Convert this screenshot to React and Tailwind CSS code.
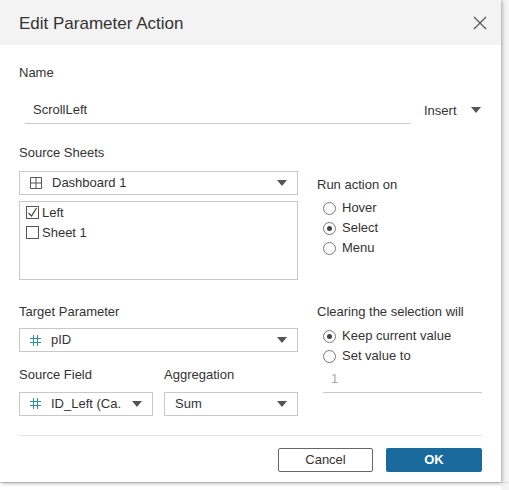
import { useState } from "react";

const Caret = () => (
  <svg width="10" height="6" viewBox="0 0 10 6" className="shrink-0"><path d="M0 0h10L5 6z" fill="#555" /></svg>
);

const Hash = () => (
  <svg width="11" height="11" viewBox="0 0 11 11" className="shrink-0"><path d="M3.5 0v11M7.5 0v11M0 3.5h11M0 7.5h11" stroke="#2f8eaa" strokeWidth="1" fill="none" /></svg>
);

const Radio = ({ on, label }) => (
  <div className="flex items-center gap-[6px] h-[20px]">
    <span className="w-[13px] h-[13px] rounded-full border border-[#777] bg-white flex items-center justify-center">
      {on ? <span className="w-[5px] h-[5px] rounded-full bg-[#444]" /> : null}
    </span>
    <span>{label}</span>
  </div>
);

const Select = ({ icon, children, className }) => (
  <div className={"h-[24px] border border-[#c8c8c8] bg-white flex items-center pl-[10px] pr-[10px] gap-[10px] " + className}>
    {icon}
    <span className="flex-1 whitespace-nowrap overflow-hidden">{children}</span>
    <Caret />
  </div>
);

export default function App() {
  const [left, setLeft] = useState(true);
  return (
    <div className="w-[509px] h-[490px] bg-white relative overflow-hidden text-[13px] text-[#333]" style={{ fontFamily: '"Liberation Sans", Arial, sans-serif' }}>
      <div className="absolute right-0 top-0 w-[8px] h-full bg-[#f4f4f4]" />
      <div className="absolute left-0 right-0 bottom-0 h-[8px] border-t border-[#e0e0e0]" />
      <div className="relative w-[501px] h-[482px] bg-white shadow-[1px_1px_4px_rgba(0,0,0,0.35)] flex flex-col">
        <div className="h-[45px] bg-[#f3f3f3] flex items-center justify-between pl-[19px] pr-[14px]">
          <span className="text-[17px] text-[#333] mt-[2px]">Edit Parameter Action</span>
          <svg width="14" height="14" viewBox="0 0 14 14"><path d="M1 1l12 12M13 1L1 13" stroke="#555" strokeWidth="1.2" /></svg>
        </div>
        <div className="px-[19px] pt-[18px] flex flex-col">
          <div>Name</div>
          <div className="flex items-end mt-[17px]">
            <div className="w-[385px] ml-[6px] border-b border-[#c8c8c8] pl-[8px] pb-[4px]">ScrollLeft</div>
            <div className="ml-[14px] pb-[4px] flex items-center gap-[14px]">Insert <Caret /></div>
          </div>
          <div className="mt-[19px]">Source Sheets</div>
          <div className="flex mt-[8px]">
            <div className="w-[279px]">
              <Select icon={<svg width="12" height="12" viewBox="0 0 12 12"><path d="M.5.5h11v11H.5zM6 .5v11M.5 6h11" stroke="#555" fill="none" /></svg>}>Dashboard 1</Select>
              <div className="h-[79px] mt-[6px] border border-[#c8c8c8] pt-[1px] pl-[6px]">
                <label className="flex items-center gap-[3px] h-[20px]" onClick={() => setLeft(!left)}>
                  <span className="w-[13px] h-[13px] border border-[#555] flex items-center justify-center">
                    {left ? <svg width="11" height="11" viewBox="0 0 11 11"><path d="M1.5 6l3 3 5-8" stroke="#444" strokeWidth="1.2" fill="none" /></svg> : null}
                  </span>
                  Left
                </label>
                <div className="flex items-center gap-[3px] h-[20px]">
                  <span className="w-[13px] h-[13px] border border-[#555]" />
                  Sheet 1
                </div>
              </div>
            </div>
            <div className="ml-[19px] pt-[4px]">
              <div>Run action on</div>
              <div className="mt-[4px] ml-[6px]">
                <Radio label="Hover" />
                <Radio on label="Select" />
                <Radio label="Menu" />
              </div>
            </div>
          </div>
          <div className="flex mt-[22px]">
            <div className="w-[279px]">
              <div>Target Parameter</div>
              <Select icon={<Hash />} className="mt-[7px]">pID</Select>
              <div className="flex gap-[11px] mt-[13px]">
                <div className="w-[134px]">
                  <div>Source Field</div>
                  <Select icon={<Hash />} className="mt-[7px] gap-[8px]">ID_Left (Ca...</Select>
                </div>
                <div className="w-[134px]">
                  <div>Aggregation</div>
                  <Select className="mt-[7px] pl-[7px]">Sum</Select>
                </div>
              </div>
            </div>
            <div className="ml-[19px] w-[165px]">
              <div>Clearing the selection will</div>
              <div className="mt-[5px] ml-[6px]">
                <Radio on label="Keep current value" />
                <Radio label="Set value to" />
              </div>
              <div className="ml-[6px] mt-[3px] border-b border-[#c8c8c8] pl-[8px] pb-[3px] text-[#aaa]">1</div>
            </div>
          </div>
          <div className="mt-[19px] border-t border-[#e3e3e3]" />
          <div className="flex justify-end gap-[13px] mt-[12px]">
            <button className="w-[95px] h-[24px] border border-[#666] rounded-[2px] bg-white text-[#333]">Cancel</button>
            <button className="w-[96px] h-[24px] rounded-[2px] bg-[#1b6a9e] text-white font-bold">OK</button>
          </div>
        </div>
      </div>
    </div>
  );
}
